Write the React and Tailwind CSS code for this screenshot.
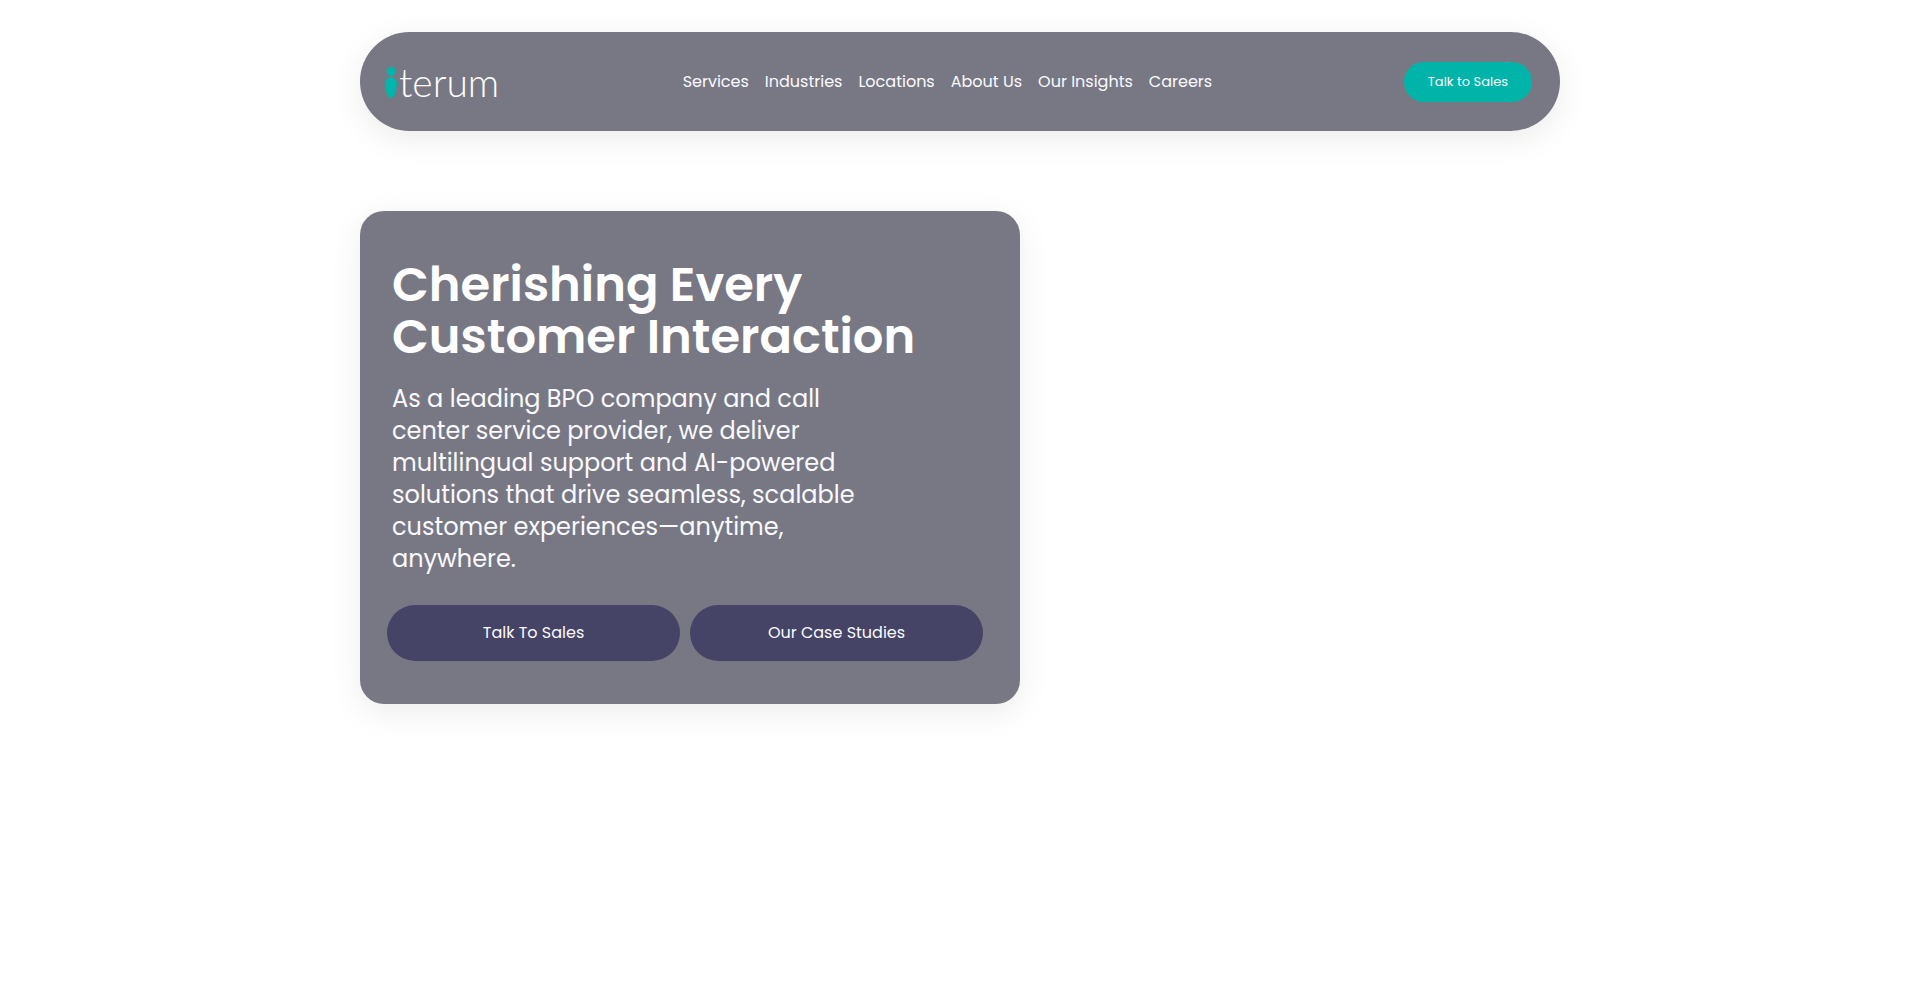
const NAV_LINKS = ['Services', 'Industries', 'Locations', 'About Us', 'Our Insights', 'Careers'];

const Logo = () => (
  <a href="#home" aria-label="iterum" className="flex w-[106px] shrink-0 items-center gap-0.5 text-white">
    <svg viewBox="0 0 12 32" className="h-8 w-3 shrink-0" fill="#00b5a9" aria-hidden="true">
      <circle cx="6.2" cy="5.4" r="4.6" />
      <path d="M6 11.200c3.600 0 6 2.600 6 6.500 0 3.700-1.200 6.900-1.900 9.900C9.600 30.400 8.200 32 6 32s-3.600-1.600-4.100-4.400C1.200 24.600 0 21.400 0 17.700c0-3.900 2.400-6.500 6-6.500z" />
    </svg>
    <span className="font-[Lato] text-[39px] leading-9 font-light">terum</span>
  </a>
);

const Header = () => (
  <header className="flex min-h-[99px] items-center justify-between rounded-[50px] bg-[#787884] pr-7 pl-[25px] shadow-[0_8px_32px_rgba(0,0,0,0.08)]">
    <Logo />
    <nav className="flex gap-4 text-base">
      {NAV_LINKS.map((label) => (
        <a key={label} href="#nav">
          {label}
        </a>
      ))}
    </nav>
    <button type="button" className="h-10 rounded-full bg-[#00b4a9] px-6 text-[13px]">
      Talk to Sales
    </button>
  </header>
);

const Hero = () => (
  <section className="mt-20 w-[55%] rounded-3xl bg-[#787884] px-8 pt-12 pb-[43px] shadow-[0_8px_32px_rgba(0,0,0,0.08)]">
    <h1 className="text-5xl leading-[52px] font-semibold text-white">
      Cherishing Every
      <br />
      Customer Interaction
    </h1>
    <p className="mt-5 text-2xl leading-8">
      As a leading BPO company and call
      <br />
      center service provider, we deliver
      <br />
      multilingual support and AI-powered
      <br />
      solutions that drive seamless, scalable
      <br />
      customer experiences—anytime,
      <br />
      anywhere.
    </p>
    <div className="mt-[30px] mr-[5px] -ml-[5px] grid grid-cols-2 gap-[10px]">
      <button type="button" className="h-14 rounded-full bg-[#454466] text-base">
        Talk To Sales
      </button>
      <button type="button" className="h-14 rounded-full bg-[#454466] text-base">
        Our Case Studies
      </button>
    </div>
  </section>
);

const App = () => (
  <div className="min-h-screen bg-white px-4 pt-8 font-[Poppins,Inter,sans-serif] text-[#fafaff]">
    <main className="mx-auto max-w-[1200px]">
      <Header />
      <Hero />
    </main>
  </div>
);

export default App;
